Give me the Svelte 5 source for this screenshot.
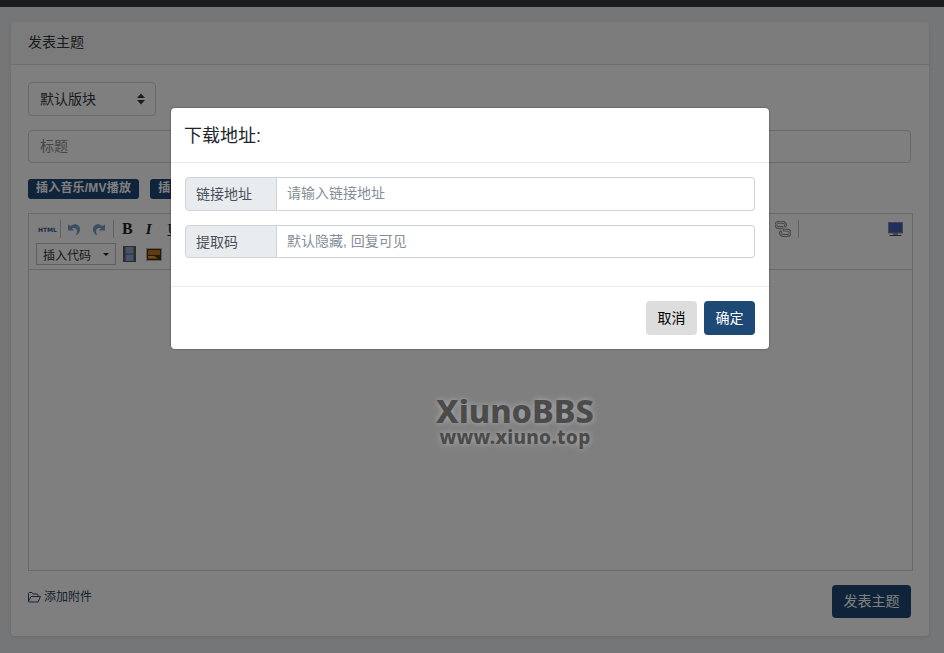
<script>
  const fields = [
    { label: '链接地址', placeholder: '请输入链接地址', cls: 'tall' },
    { label: '提取码', placeholder: '默认隐藏, 回复可见', cls: 'short' }
  ];
</script>

<div class="page">
  <div class="navbar"></div>
  <main class="card">
    <header class="card-head">发表主题</header>
    <section class="card-body">
      <div class="select">
        <span>默认版块</span>
        <svg width="8" height="12" viewBox="0 0 8 12"><path d="M4 0.5 8 5H0zM4 11.500 0 7h8z" fill="#343a40"/></svg>
      </div>
      <input class="title" placeholder="标题" />
      <div class="badges">
        <span class="badge">插入音乐/MV播放</span>
        <span class="badge">插入视频</span>
      </div>
      <div class="editor">
        <div class="toolbar">
          <div class="tb-row">
            <span class="html">HTML</span>
            <i class="sep"></i>
            <svg class="ic" width="13" height="13" viewBox="0 0 14 14"><path d="M0 1.500v6.500h6.500L4.500 5.800C6.500 4.600 9 5.500 9.500 8c.3 1.800-.3 3.800-1.500 5.500 3.500-1.300 5.500-4.500 5-7.700C12.200 1.300 6.800-.5 2.800 3.300z" fill="#7b9ec4"/></svg>
            <svg class="ic redo" width="13" height="13" viewBox="0 0 14 14"><path d="M14 1.500v6.500H7.500l2-2.200C7.500 4.600 5 5.500 4.500 8c-.3 1.800.3 3.800 1.500 5.500-3.500-1.300-5.500-4.500-5-7.700C1.800 1.300 7.200-.5 11.200 3.300z" fill="#7b9ec4"/></svg>
            <i class="sep s2"></i>
            <b class="fmt bold">B</b>
            <em class="fmt ital">I</em>
            <span class="fmt under">U</span>
            <svg class="link" width="16" height="16" viewBox="0 0 16 16" fill="none" stroke-linecap="round"><path d="M7 6.500H3.500a2.600 2.600 0 0 1 0-5.200h4.500a2.600 2.600 0 0 1 2.200 3.800M9 9.200h3.500a2.600 2.600 0 0 1 0 5.300H8a2.600 2.600 0 0 1-2.400-3.700" stroke="#8a8a8a" stroke-width="2.800"/><path d="M7 6.500H3.500a2.600 2.600 0 0 1 0-5.200h4.500a2.600 2.600 0 0 1 2.200 3.800M9 9.200h3.500a2.600 2.600 0 0 1 0 5.300H8a2.600 2.600 0 0 1-2.400-3.700" stroke="#fff" stroke-width="1"/></svg>
            <i class="sep s3"></i>
            <svg class="screen" width="15" height="15" viewBox="0 0 15 15"><rect x=".5" y=".5" width="14" height="10.500" fill="#3f62b5" stroke="#8e8e8e"/><path d="M5 11.500h5v1H5zM1.500 13h12v1h-12z" fill="#444"/></svg>
          </div>
          <div class="tb-row second">
            <div class="code-select"><span>插入代码</span><svg width="6" height="3" viewBox="0 0 6 3"><path d="M0 0h6L3 3z" fill="#222"/></svg></div>
            <svg class="film" width="13" height="16" viewBox="0 0 13 16"><rect width="13" height="16" fill="#5a5a5a"/><rect x="2.500" y="1" width="8" height="6.500" fill="#8aa6d8"/><rect x="2.500" y="8.500" width="8" height="6.500" fill="#8aa6d8"/></svg>
            <svg class="pic" width="16" height="13" viewBox="0 0 16 13"><rect x=".5" y=".5" width="15" height="12" fill="#50320e" stroke="#b5b5b5"/><rect x="2" y="2" width="12" height="5" fill="#b8761f"/><path d="M2 8h6l4 2.500H2z" fill="#e0a040"/></svg>
          </div>
        </div>
      </div>
      <footer class="actions">
        <span class="attach">
          <svg width="13" height="11" viewBox="0 0 13 11" fill="none" stroke="#3a4a66" stroke-width="1"><path d="M.5 9.500V1.500a1 1 0 0 1 1-1h2.500l1 1.500h4a1 1 0 0 1 1 1v1M.5 9.500l2.500-5h9.500l-2.500 5.500H1z"/></svg>
          添加附件
        </span>
        <button class="btn primary submit">发表主题</button>
      </footer>
    </section>
  </main>

  <div class="overlay">
    <div class="modal">
      <div class="modal-head">下载地址:</div>
      <div class="modal-body">
        {#each fields as f}
          <div class="group {f.cls}">
            <span class="addon">{f.label}</span>
            <input placeholder={f.placeholder} />
          </div>
        {/each}
      </div>
      <div class="modal-foot">
        <button class="btn cancel">取消</button>
        <button class="btn primary">确定</button>
      </div>
    </div>
  </div>

  <div class="watermark">
    <div class="wm-main">XiunoBBS</div>
    <div class="wm-sub">www.xiuno.top</div>
  </div>
</div>

<style>
  :global(body) {
    margin: 0;
    background: #e9ecef;
    font-family: "Liberation Sans", "Noto Sans CJK SC", sans-serif;
    font-size: 14px;
    color: #343a40;
  }
  .page {
    position: relative;
    width: 944px;
    height: 653px;
    overflow: hidden;
    box-sizing: border-box;
    padding: 0 15px 0 11px;
  }
  .navbar {
    height: 7px;
    margin: 0 -15px 15px -11px;
    background: #343a40;
  }
  .card {
    background: #fff;
    border-radius: 4px;
    box-shadow: 0 1px 4px rgba(0, 0, 0, .1);
    height: 614px;
    box-sizing: border-box;
    width: 918px;
  }
  .card-head {
    height: 43px;
    box-sizing: border-box;
    padding: 0 17px;
    line-height: 41px;
    background: rgba(0, 0, 0, .03);
    border-bottom: 1px solid rgba(0, 0, 0, .1);
    border-radius: 4px 4px 0 0;
  }
  .card-body {
    padding: 17px;
    display: flex;
    flex-direction: column;
  }
  .select {
    width: 128px;
    height: 34px;
    box-sizing: border-box;
    border: 1px solid #ced4da;
    border-radius: 4px;
    padding: 0 10px 0 11px;
    display: flex;
    align-items: center;
    justify-content: space-between;
    margin-bottom: 14px;
  }
  .select span { margin-bottom: 2px; }
  input {
    font: inherit;
    color: #495057;
    outline: none;
    background: #fff;
  }
  input::placeholder {
    color: #868e96;
    opacity: 1;
  }
  .title {
    width: 883px;
    height: 33px;
    box-sizing: border-box;
    border: 1px solid #ced4da;
    border-radius: 4px;
    padding: 0 11px 2px;
    margin-bottom: 16px;
  }
  .badges {
    display: flex;
    gap: 11px;
    margin-bottom: 14px;
  }
  .badge {
    height: 20px;
    line-height: 19px;
    padding: 0 8px;
    font-size: 12px;
    font-weight: 700;
    letter-spacing: .2px;
    color: #fff;
    background: #1e4975;
    border-radius: 3px;
  }
  .editor {
    width: 885px;
    height: 358px;
    box-sizing: border-box;
    border: 1px solid #d2d2d2;
    flex: none;
  }
  .toolbar {
    height: 56px;
    box-sizing: border-box;
    border-bottom: 1px solid #d2d2d2;
    padding: 6px 7px 0;
  }
  .tb-row {
    display: flex;
    align-items: center;
    height: 18px;
    position: relative;
  }
  .tb-row.second {
    height: 22px;
    margin-top: 5px;
  }
  .html {
    font: 700 6px "DejaVu Sans", sans-serif;
    color: #2e5a8c;
    width: 22px;
    margin-left: 2px;
  }
  .sep {
    width: 1px;
    height: 18px;
    background: #c0c0c0;
    flex: none;
  }
  .ic { margin-left: 7px; }
  .redo { margin-left: 11px; }
  .s2 { margin-left: 8px; }
  .fmt {
    font-family: "Liberation Serif", serif;
    color: #222;
    line-height: 18px;
  }
  .bold { margin-left: 8px; font-weight: 700; font-size: 16px; }
  .ital { margin-left: 13px; font-weight: 700; font-size: 15px; }
  .under { margin-left: 16px; font-size: 15px; text-decoration: underline; }
  .link { margin-left: 597px; }
  .s3 { margin-left: 7px; }
  .screen { margin-left: auto; margin-right: 2px; }
  .code-select {
    width: 80px;
    height: 22px;
    box-sizing: border-box;
    border: 1px solid #c0c0c0;
    padding: 0 6px;
    display: flex;
    align-items: center;
    justify-content: space-between;
    font-size: 12px;
    color: #333;
  }
  .film { margin-left: 7px; }
  .pic { margin-left: 10px; }
  .actions {
    margin-top: 14px;
    display: flex;
    justify-content: space-between;
    align-items: flex-start;
    width: 883px;
  }
  .attach {
    display: flex;
    align-items: center;
    gap: 3px;
    font-size: 12px;
    line-height: 24px;
    color: #2a4568;
  }
  .btn {
    font: inherit;
    border: 0;
    border-radius: 4px;
    height: 34px;
    padding: 0 11.500px 3px;
    cursor: pointer;
    color: #000;
  }
  .primary {
    background: #1e4975;
    color: #fff;
  }
  .submit { height: 33px; width: 79px; padding: 0 0 3px; }
  .cancel { background: #ddd; }
  .overlay {
    position: absolute;
    inset: 0;
    background: rgba(0, 0, 0, .5);
    box-sizing: border-box;
    padding: 108px 4px 0 0;
    display: flex;
    justify-content: center;
    align-items: flex-start;
  }
  .modal {
    width: 598px;
    background: #fff;
    border-radius: 4px;
    box-shadow: 0 0 2px rgba(0, 0, 0, .5);
    color: #212529;
  }
  .modal-head {
    padding: 15px 14px 13px 13px;
    font-size: 18px;
    line-height: 26px;
    border-bottom: 1px solid #e9ecef;
  }
  .modal-body {
    padding: 14px 14px 28px;
    display: flex;
    flex-direction: column;
    gap: 14px;
  }
  .group {
    display: flex;
    height: 34px;
  }
  .group.short { height: 33px; }
  .addon {
    width: 92px;
    box-sizing: border-box;
    padding: 0 0 2px 10px;
    background: #e9ecef;
    border: 1px solid #ced4da;
    border-radius: 4px 0 0 4px;
    color: #495057;
    display: flex;
    align-items: center;
    flex: none;
  }
  .group input {
    flex: 1;
    min-width: 0;
    box-sizing: border-box;
    border: 1px solid #ced4da;
    border-left: 0;
    border-radius: 0 4px 4px 0;
    padding: 0 10px 2px;
  }
  .modal-foot {
    border-top: 1px solid #e9ecef;
    padding: 14px;
    display: flex;
    justify-content: flex-end;
    gap: 7px;
  }
  .watermark {
    position: absolute;
    left: 430px;
    top: 394px;
    width: 170px;
    font-family: "Noto Sans", sans-serif;
    font-weight: 800;
    color: #4b4b4b;
    text-align: center;
    text-shadow: 0 0 6px rgba(255, 255, 255, .4);
    white-space: nowrap;
    pointer-events: none;
  }
  .wm-main { font-size: 32.500px; line-height: 33px; }
  .wm-sub { font-size: 19px; line-height: 20px; letter-spacing: .3px; }
</style>
